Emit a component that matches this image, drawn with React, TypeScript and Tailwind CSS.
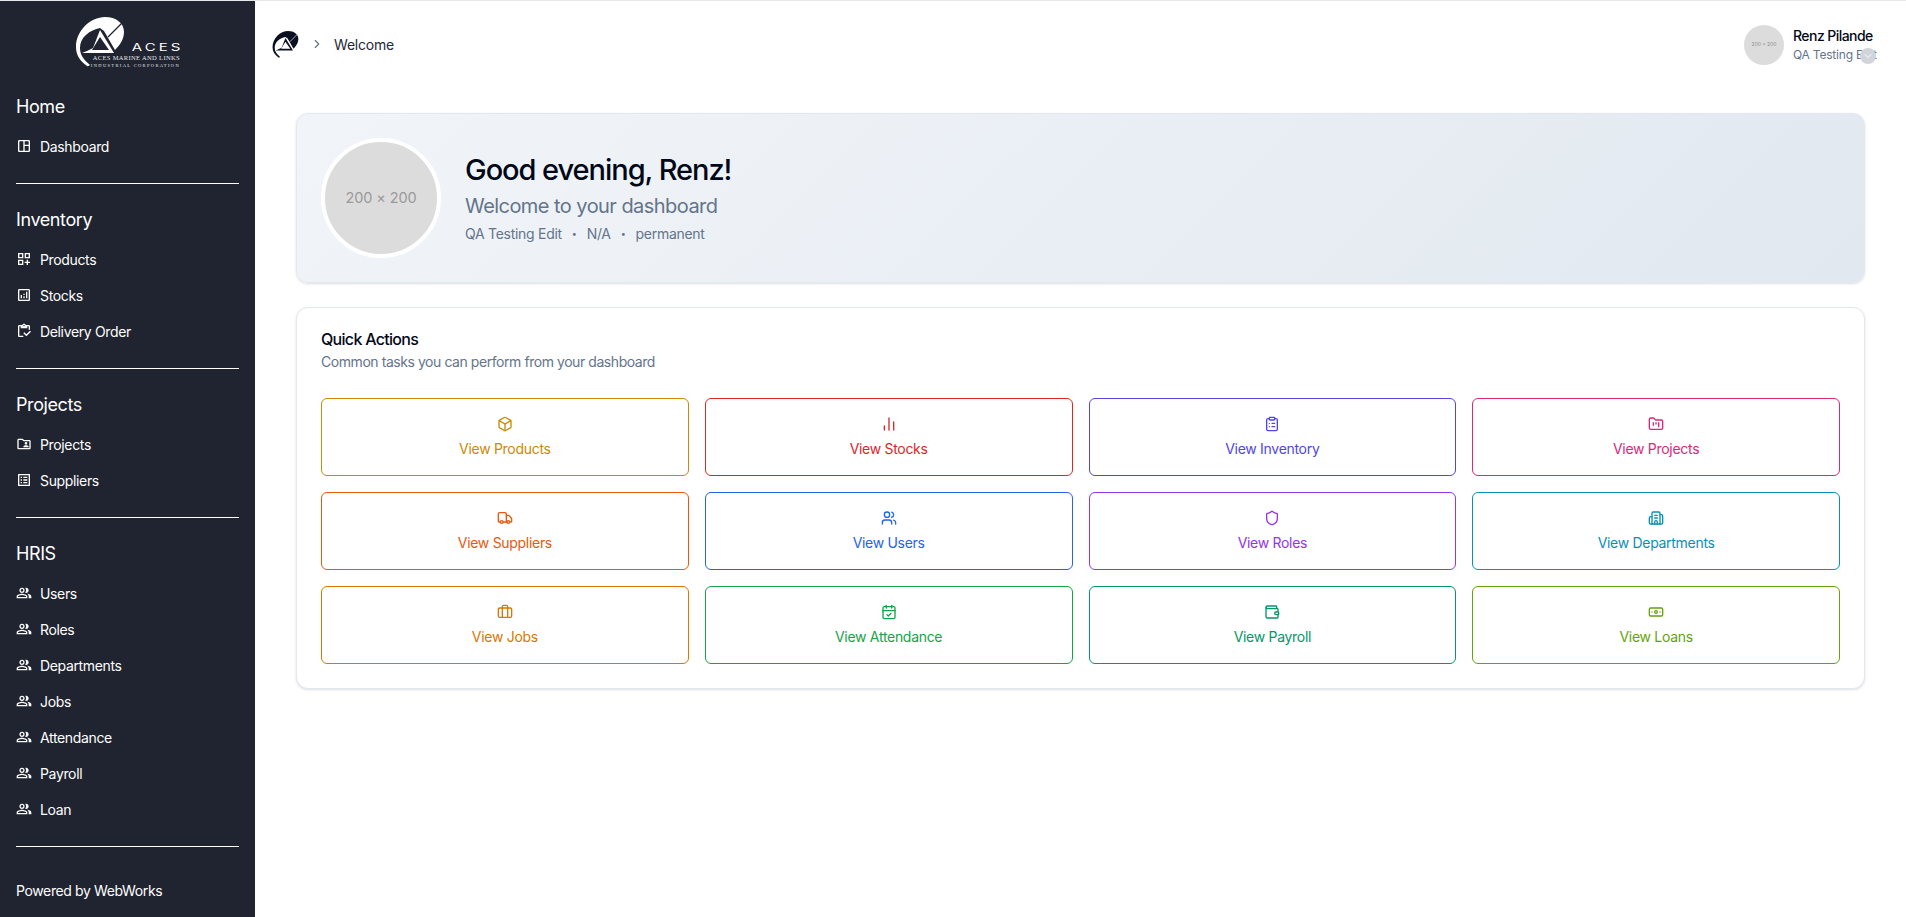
import type { ComponentType } from "react";
import {
  Banknote,
  Box,
  Briefcase,
  Building2,
  CalendarCheck,
  ChartNoAxesColumn,
  ChevronDown,
  ChevronRight,
  ClipboardList,
  FolderKanban,
  Shield,
  Truck,
  Users,
  Wallet,
} from "lucide-react";
import {
  MdOutlineAnalytics,
  MdOutlineDashboardCustomize,
  MdOutlineFolderShared,
  MdOutlineInventory,
  MdOutlineListAlt,
  MdOutlinePeopleAlt,
  MdOutlineSpaceDashboard,
} from "react-icons/md";

type IconType = ComponentType<{ className?: string }>;

// --- Sidebar groups ---
const navGroups: { title: string; items: { label: string; icon: IconType }[] }[] = [
  { title: "Home", items: [{ label: "Dashboard", icon: MdOutlineSpaceDashboard }] },
  {
    title: "Inventory",
    items: [
      { label: "Products", icon: MdOutlineDashboardCustomize },
      { label: "Stocks", icon: MdOutlineAnalytics },
      { label: "Delivery Order", icon: MdOutlineInventory },
    ],
  },
  {
    title: "Projects",
    items: [
      { label: "Projects", icon: MdOutlineFolderShared },
      { label: "Suppliers", icon: MdOutlineListAlt },
    ],
  },
  {
    title: "HRIS",
    items: ["Users", "Roles", "Departments", "Jobs", "Attendance", "Payroll", "Loan"].map((label) => ({
      label,
      icon: MdOutlinePeopleAlt,
    })),
  },
];

// --- Quick action buttons ---
const actions: { label: string; icon: IconType; color: string }[] = [
  { label: "View Products", icon: Box, color: "border-[#ca8a04] text-[#ca8a04]" },
  { label: "View Stocks", icon: ChartNoAxesColumn, color: "border-[#dc2626] text-[#dc2626]" },
  { label: "View Inventory", icon: ClipboardList, color: "border-[#4f46e5] text-[#4f46e5]" },
  { label: "View Projects", icon: FolderKanban, color: "border-[#db2777] text-[#db2777]" },
  { label: "View Suppliers", icon: Truck, color: "border-[#ea580c] text-[#ea580c]" },
  { label: "View Users", icon: Users, color: "border-[#2563eb] text-[#2563eb]" },
  { label: "View Roles", icon: Shield, color: "border-[#9333ea] text-[#9333ea]" },
  { label: "View Departments", icon: Building2, color: "border-[#0891b2] text-[#0891b2]" },
  { label: "View Jobs", icon: Briefcase, color: "border-[#d97706] text-[#d97706]" },
  { label: "View Attendance", icon: CalendarCheck, color: "border-[#16a34a] text-[#16a34a]" },
  { label: "View Payroll", icon: Wallet, color: "border-[#059669] text-[#059669]" },
  { label: "View Loans", icon: Banknote, color: "border-[#65a30d] text-[#65a30d]" },
];

// The swoosh and "A" of the company mark
const LogoMark = ({ className, fill, cut }: { className: string; fill: string; cut: string }) => (
  <svg viewBox="0 0 52 50" className={className}>
    <path
      d="M12 49C5 44 1 38 1 30 1 14 15 0 30 0c11 0 19 6 19 15 0 7-4 13-9 18L29 14l-4-3C15 13 5 20 5 31c0 7 4 12 10 17-1 1-2 1.500-3 1z"
      fill={fill}
    />
    <path d="M33 20 47 6" stroke={cut} strokeWidth="1.2" fill="none" />
    <path d="M25 13 39 36H7l5-2 6-3z" fill={fill} />
    <path d="M25 20 34 33H17z" fill={cut} />
  </svg>
);

const Sidebar = () => (
  <aside className="flex w-[255px] shrink-0 flex-col bg-[#1f2430] px-4 text-white">
    {/* Logo */}
    <div className="relative mx-auto mt-[16px] h-[50px] w-[105px]">
      <LogoMark className="absolute left-0 top-0 h-[50px] w-[52px]" fill="#ffffff" cut="#1f2430" />
      <div className="absolute right-[-3px] top-[24px] origin-right scale-x-150 text-[10px] leading-[12px] tracking-[2px]">
        ACES
      </div>
      <div className="absolute right-0 top-[37px] whitespace-nowrap text-right font-['Liberation_Serif',serif] text-[6.5px] leading-[7px] tracking-[0.35px] text-gray-200">
        ACES MARINE AND LINKS
        <br />
        <span className="text-[4.5px] tracking-[0.3em]">INDUSTRIAL CORPORATION</span>
      </div>
    </div>

    {/* Nav */}
    <nav className="mt-[26px] flex flex-col">
      {navGroups.map((group) => (
        <div key={group.title} className="mb-[22px] border-b border-white pb-[19px]">
          <h3 className="text-[18px] font-normal leading-[28px] tracking-[-0.4px]">{group.title}</h3>
          <ul className="mt-[7px] flex flex-col">
            {group.items.map((item) => (
              <li key={item.label} className="flex h-[36px] items-center gap-[8px] text-[14px] tracking-[-0.35px]">
                <item.icon className="h-[16px] w-[16px]" />
                <span>{item.label}</span>
              </li>
            ))}
          </ul>
        </div>
      ))}
    </nav>
    <p className="mt-[12px] text-[14px] leading-[20px] tracking-[-0.37px]">Powered by WebWorks</p>
  </aside>
);

const Topbar = () => (
  <header className="flex h-[88px] items-center justify-between pl-[17px] pr-[40px]">
    <div className="flex items-center pb-[2px]">
      <LogoMark className="h-[27px] w-[28px]" fill="#0b1020" cut="#ffffff" />
      <ChevronRight className="ml-[10px] h-[14px] w-[14px] text-gray-500" />
      <span className="ml-[10px] text-[14px] tracking-[-0.2px] text-[#1f2937]">Welcome</span>
    </div>
    <div className="relative flex w-[122px] items-center gap-[9px]">
      <div className="flex h-[40px] w-[40px] shrink-0 items-center justify-center rounded-full bg-[#dcdcdc] text-[5px] text-[#8f8f8f]">
        200 × 200
      </div>
      <div className="min-w-0">
        <p className="whitespace-nowrap text-[14px] font-medium leading-[18px] tracking-[-0.55px] text-[#020817]">
          Renz Pilande
        </p>
        <p className="mt-[1px] whitespace-nowrap text-[12px] leading-[18px] tracking-[-0.2px] text-[#64748b]">
          QA Testing Edit
        </p>
      </div>
      {/* Dropdown badge sits over the end of the role text */}
      <span className="absolute left-[116px] top-[23px] flex h-[16px] w-[16px] items-center justify-center rounded-full bg-[#d1d5db]">
        <ChevronDown className="h-[12px] w-[12px] text-white" />
      </span>
    </div>
  </header>
);

export default function App() {
  return (
    <div className="flex min-h-[917px] border-t border-[#e5e7eb] bg-white font-['Inter',sans-serif]">
      <Sidebar />
      <main className="min-w-0 flex-1">
        <Topbar />
        <div className="flex flex-col gap-[24px] pb-[40px] pl-[41px] pr-[41px] pt-[24px]">
          {/* Welcome banner */}
          <section className="flex items-center gap-[24px] rounded-[12px] border border-[#e2e8f0] bg-[linear-gradient(135deg,#f1f5f9,#e2e8f0)] p-[24px] shadow-sm">
            <div className="flex h-[120px] w-[120px] items-center justify-center rounded-full border-4 border-white bg-[#dcdcdc] text-[14.5px] tracking-[-0.1px] text-[#9a9a9a]">
              200 × 200
            </div>
            <div>
              <h1 className="text-[29px] font-medium leading-[36px] tracking-[-1.05px] text-[#020817]">
                Good evening, Renz!
              </h1>
              <p className="mt-[4px] text-[20px] leading-[28px] tracking-[-0.55px] text-[#64748b]">
                Welcome to your dashboard
              </p>
              <div className="mt-[4px] flex items-center gap-[10px] text-[14px] leading-[20px] tracking-[-0.28px] text-[#64748b]">
                <span>QA Testing Edit</span>
                <span className="text-[9px]">•</span>
                <span>N/A</span>
                <span className="text-[9px]">•</span>
                <span>permanent</span>
              </div>
            </div>
          </section>

          {/* Quick actions */}
          <section className="rounded-[12px] border border-[#e2e8f0] bg-white p-[24px] shadow-sm">
            <h2 className="text-[16px] font-medium leading-[14px] tracking-[-0.7px] text-[#020817]">Quick Actions</h2>
            <p className="mt-[6px] text-[14px] leading-[20px] tracking-[-0.44px] text-[#64748b]">
              Common tasks you can perform from your dashboard
            </p>
            <div className="mt-[26px] grid grid-cols-4 gap-[16px]">
              {actions.map((action) => (
                <button
                  key={action.label}
                  className={`flex h-[78px] flex-col items-center justify-center gap-[7px] rounded-[6px] border bg-white text-[14px] font-normal leading-[20px] tracking-[-0.3px] ${action.color}`}
                >
                  <action.icon className="h-[16px] w-[16px]" />
                  <span>{action.label}</span>
                </button>
              ))}
            </div>
          </section>
        </div>
      </main>
    </div>
  );
}
